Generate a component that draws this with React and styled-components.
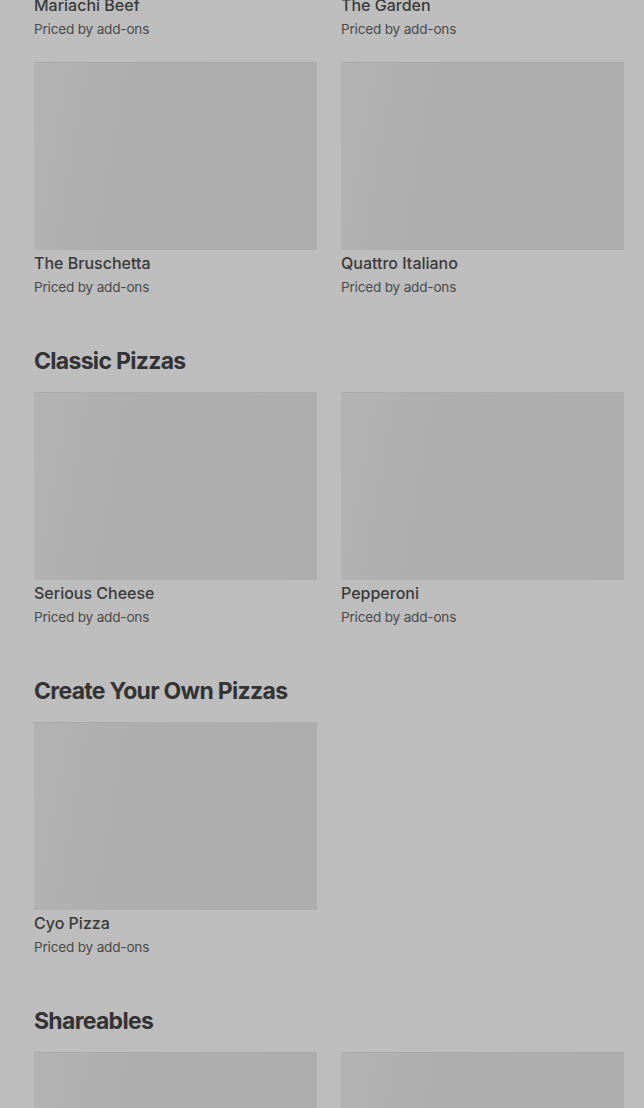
import styled, { createGlobalStyle } from "styled-components";

const GlobalStyle = createGlobalStyle`
  html, body {
    margin: 0;
    padding: 0;
    background: #bdbdbd;
    font-family: Inter, "Noto Sans", sans-serif;
    overflow: hidden;
  }
`;

const sections = [
  {
    title: "Specialty Pizzas",
    items: ["Mariachi Beef", "The Garden", "The Bruschetta", "Quattro Italiano"],
  },
  { title: "Classic Pizzas", items: ["Serious Cheese", "Pepperoni"] },
  { title: "Create Your Own Pizzas", items: ["Cyo Pizza"] },
  { title: "Shareables", items: ["Garlic Knots", "Wings"] },
];

export default function App() {
  return (
    <>
      <GlobalStyle />
      <Page>
        {sections.map((section, i) => (
          <Section key={section.title}>
            {i > 0 && <Heading>{section.title}</Heading>}
            <Grid>
              {section.items.map((name) => (
                <Card key={name}>
                  <Thumb />
                  <Name>{name}</Name>
                  <Price>Priced by add-ons</Price>
                </Card>
              ))}
            </Grid>
          </Section>
        ))}
      </Page>
    </>
  );
}

const Page = styled.div`
  padding: 0 20px 0 34px;
  margin-top: -196px;
  display: flex;
  flex-direction: column;
  gap: 48px;
`;

const Section = styled.section`
  display: flex;
  flex-direction: column;
  gap: 15px;
`;

const Heading = styled.h2`
  margin: 0;
  font-size: 23px;
  line-height: 32px;
  font-weight: 700;
  letter-spacing: -0.7px;
  color: #333;
`;

const Grid = styled.div`
  display: grid;
  grid-template-columns: 283px 283px;
  column-gap: 24px;
  row-gap: 23px;
`;

const Card = styled.div`
  display: flex;
  flex-direction: column;
`;

const Thumb = styled.div`
  height: 188px;
  background: linear-gradient(100deg, #b3b3b3 0%, #aeaeae 35%, #adadad 100%);
  border-top: 1px solid #aaa;
  box-sizing: border-box;
`;

const Name = styled.div`
  font-size: 16px;
  line-height: 24px;
  font-weight: 500;
  color: #3a3a3a;
  margin-top: 1px;
`;

const Price = styled.div`
  font-size: 13.6px;
  line-height: 20px;
  letter-spacing: -0.2px;
  color: #4a4a4a;
  margin-top: 2px;
`;
